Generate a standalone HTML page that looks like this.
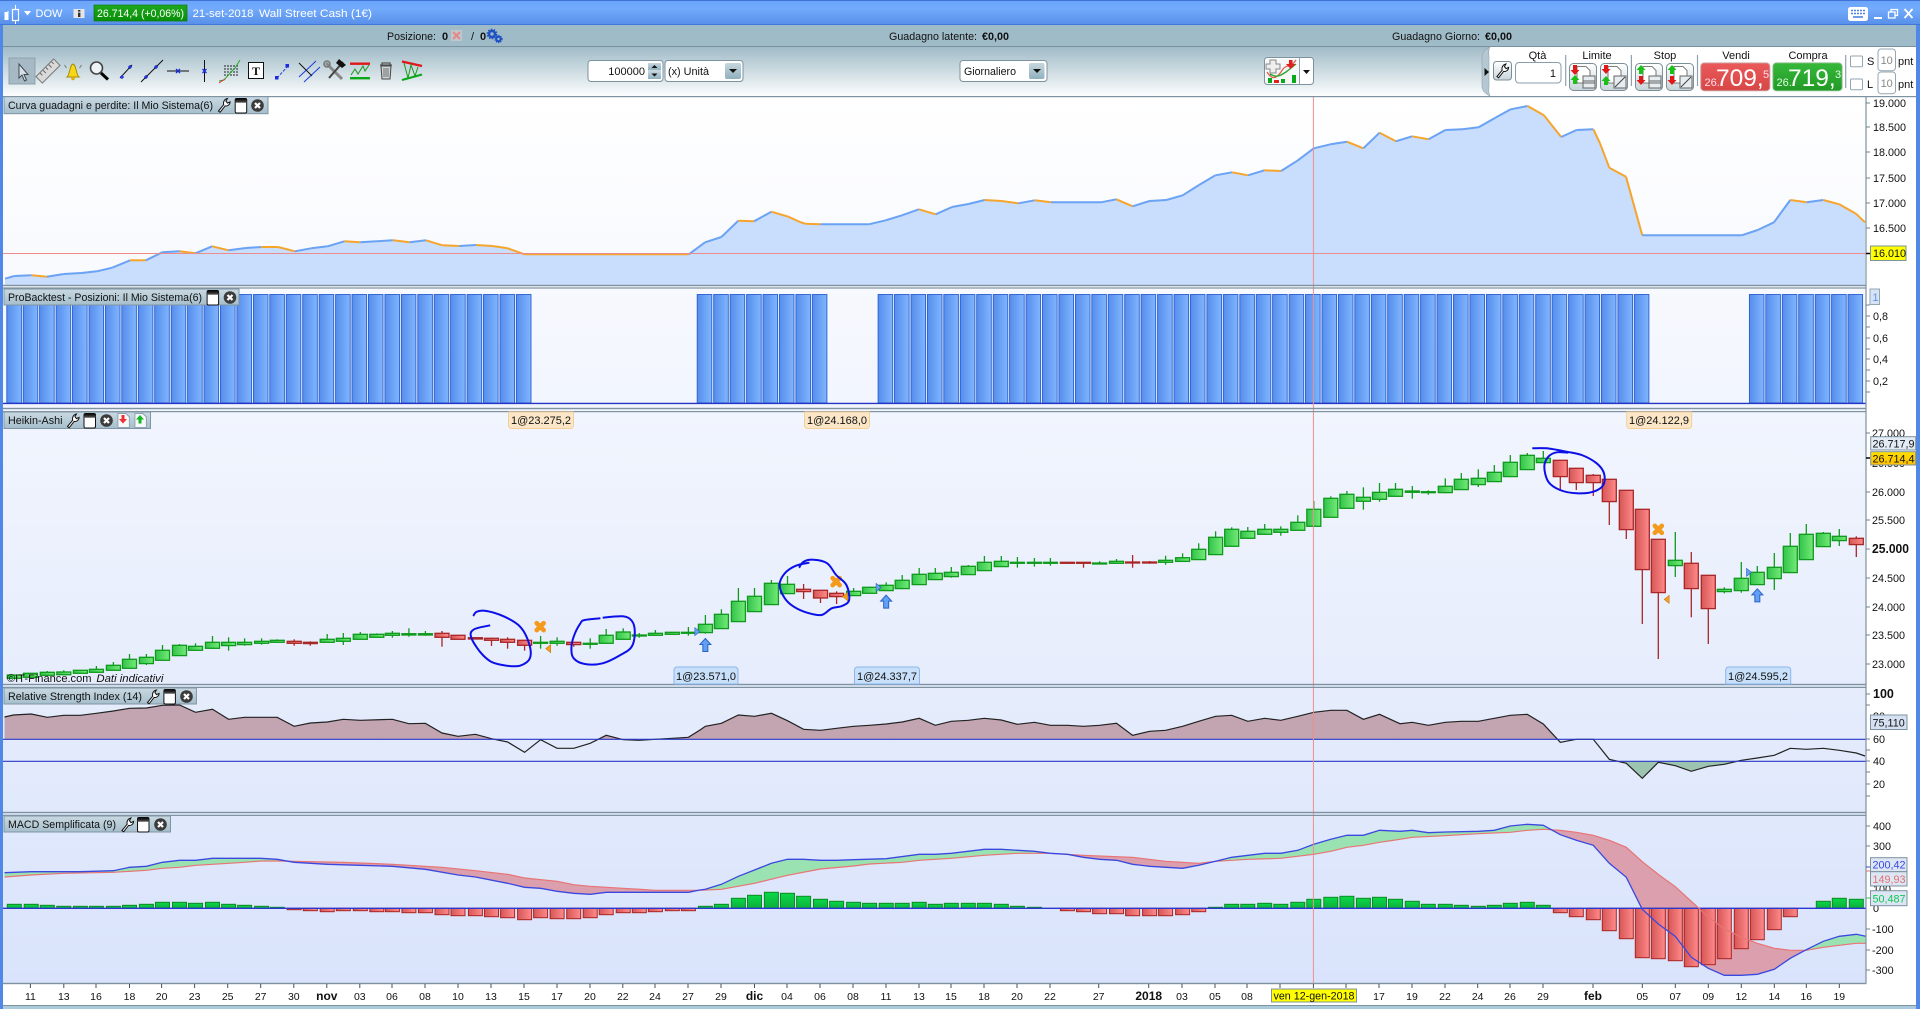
<!DOCTYPE html>
<html lang="it"><head><meta charset="utf-8"><title>DOW</title>
<style>
html,body{margin:0;padding:0;width:1920px;height:1009px;overflow:hidden;background:#fff}
svg{display:block;font-family:"Liberation Sans",Arial,sans-serif;font-size:11px;fill:#111}
text{white-space:pre}
.b{font-weight:bold}
.ax{font-size:10.8px}
</style></head><body>
<svg width="1920" height="1009" viewBox="0 0 1920 1009">
<defs>
<linearGradient id="gTitle" x1="0" y1="0" x2="0" y2="1"><stop offset="0" stop-color="#6aa4fa"/><stop offset=".35" stop-color="#72abfc"/><stop offset="1" stop-color="#578ee8"/></linearGradient>
<linearGradient id="gTool" x1="0" y1="0" x2="0" y2="1"><stop offset="0" stop-color="#a0bbc7"/><stop offset="1" stop-color="#fdfefe"/></linearGradient>
<linearGradient id="gPlot" x1="0" y1="0" x2="0" y2="1"><stop offset="0" stop-color="#ffffff"/><stop offset="1" stop-color="#d9e3fb"/></linearGradient>
<linearGradient id="gTab" x1="0" y1="0" x2="0" y2="1"><stop offset="0" stop-color="#c9d9e2"/><stop offset="1" stop-color="#a6bfcc"/></linearGradient>
<linearGradient id="gBar" x1="0" y1="0" x2="1" y2="0"><stop offset="0" stop-color="#558ded"/><stop offset="1" stop-color="#80b6fd"/></linearGradient>
<linearGradient id="gG" x1="0" y1="0" x2="1" y2="0"><stop offset="0" stop-color="#32c44a"/><stop offset="1" stop-color="#74ea78"/></linearGradient>
<linearGradient id="gR" x1="0" y1="0" x2="1" y2="0"><stop offset="0" stop-color="#d65656"/><stop offset="1" stop-color="#ff8a8a"/></linearGradient>
<linearGradient id="gHG" x1="0" y1="0" x2="0" y2="1"><stop offset="0" stop-color="#0ad848"/><stop offset="1" stop-color="#0cae3a"/></linearGradient>
<linearGradient id="gBtn" x1="0" y1="0" x2="0" y2="1"><stop offset="0" stop-color="#fff"/><stop offset="1" stop-color="#c8d4da"/></linearGradient>
<linearGradient id="gDrop" x1="0" y1="0" x2="0" y2="1"><stop offset="0" stop-color="#c6d6de"/><stop offset="1" stop-color="#8fb0bf"/></linearGradient>
<linearGradient id="gSell" x1="0" y1="0" x2="0" y2="1"><stop offset="0" stop-color="#ea5a5a"/><stop offset="1" stop-color="#d84646"/></linearGradient>
<linearGradient id="gBuy" x1="0" y1="0" x2="0" y2="1"><stop offset="0" stop-color="#36b83a"/><stop offset="1" stop-color="#229a26"/></linearGradient>
<linearGradient id="gGrn" x1="0" y1="0" x2="0" y2="1"><stop offset="0" stop-color="#1fa81f"/><stop offset="1" stop-color="#078f07"/></linearGradient>
<linearGradient id="gCur" x1="0" y1="0" x2="0" y2="1"><stop offset="0" stop-color="#ffe000"/><stop offset="1" stop-color="#ffbf00"/></linearGradient>
<linearGradient id="gWin" x1="0" y1="0" x2="0" y2="1"><stop offset="0" stop-color="#000"/><stop offset="1" stop-color="#555"/></linearGradient>
<g id="iWrench"><path d="M2 13.5 L7.2 7.2 C6.4 4.6 7.8 1.6 11 1 L9.4 3.6 L11 5.6 L13.6 4.4 C13.6 7 11 9 8.6 8.4 L3.6 14.8 Z" fill="#fff" stroke="#111" stroke-width="1"/></g>
<g id="iWin"><rect x=".5" y=".5" width="11.5" height="14.5" rx="1.5" fill="#fff" stroke="#111"/><rect x=".5" y=".5" width="11.5" height="4.2" fill="url(#gWin)"/></g>
<g id="iClose"><circle cx="6.5" cy="7.5" r="6.3" fill="#3c3c3c"/><path d="M4 5 L9 10 M9 5 L4 10" stroke="#fff" stroke-width="2.2"/></g>
<g id="iDoc"><path d="M.5 .5 H8.5 L12 4 V14.5 H.5 Z" fill="#f6f8fa" stroke="#8fa4b0"/></g>
<g id="iTB"><rect x=".5" y=".5" width="27" height="27" rx="4" fill="url(#gBtn)" stroke="#7b8f9a"/><path d="M8 3.5 H17 L21 7.5 V20 H8 Z" fill="#fff" stroke="#555" stroke-width=".8"/></g>
</defs>

<rect width="1920" height="1009" fill="#fff"/>
<rect x="0" y="0" width="1920" height="25" fill="url(#gTitle)"/>
<rect y="0" width="1920" height="1" fill="#3f72d4"/>
<rect y="24" width="1920" height="1" fill="#3f78dc"/>
<rect y="25" width="1920" height="21.5" fill="#9fbbc7"/>
<rect y="46" width="1920" height="1" fill="#7a929f"/>
<rect y="47" width="1920" height="49.5" fill="url(#gTool)"/>

<rect x="3" y="97" width="1863" height="886" fill="url(#gPlot)"/>

<g id="charts"></g>

<g fill="#7e929f">
<rect x="3" y="96" width="1917" height="1.2"/>
<rect x="3" y="284.8" width="1863.5" height="1.4"/><rect x="3" y="287.4" width="1863.5" height="1.2"/>
<rect x="3" y="407.8" width="1863.5" height="1.4"/><rect x="3" y="411" width="1863.5" height="1.2"/>
<rect x="3" y="683.8" width="1863.5" height="1.4"/><rect x="3" y="686.8" width="1863.5" height="1.2"/>
<rect x="3" y="811.8" width="1863.5" height="1.4"/><rect x="3" y="814.8" width="1863.5" height="1.2"/>
<rect x="3" y="982.8" width="1863.5" height="1.4"/><rect x="3" y="1005" width="1917" height="1.2"/>
<rect x="1865.4" y="97" width="1.2" height="886"/>
</g>
<rect y="1006" width="1920" height="3" fill="#a9cbdc"/>
<rect x="0" y="25" width="3" height="984" fill="#4f88e6"/>
<rect x="1916" y="25" width="4" height="984" fill="#4f88e6"/>

<!-- title bar -->
<g>
<path d="M8 11 V20 M8 13 V18" stroke="#fff" stroke-width="1"/><rect x="4.5" y="12" width="3.5" height="8" fill="#fff"/>
<rect x="12.5" y="9.5" width="6" height="11" fill="none" stroke="#fff" stroke-width="1.2"/><path d="M15.5 5 V9.5 M15.5 20.5 V24" stroke="#fff"/>
<path d="M24 11 H31 L27.5 15.5 Z" fill="#fff"/>
<text x="35.5" y="17" style="fill:#fff">DOW</text>
<rect x="73.5" y="9" width="11" height="9" fill="#e6e6e6"/><rect x="78" y="10" width="2.4" height="1.6" fill="#333"/><rect x="78" y="12.6" width="2.4" height="4.4" fill="#333"/>
<rect x="94" y="5" width="93" height="16" fill="url(#gGrn)" stroke="#0a7a0a" stroke-width=".7"/>
<text x="97" y="17" style="fill:#fff" textLength="87" lengthAdjust="spacingAndGlyphs">26.714,4 (+0,06%)</text>
<text x="192.5" y="17" style="fill:#fff" textLength="61" lengthAdjust="spacingAndGlyphs">21-set-2018</text>
<text x="259" y="17" style="fill:#fff" textLength="113" lengthAdjust="spacingAndGlyphs">Wall Street Cash (1€)</text>
<rect x="1848" y="7" width="20" height="14" rx="2.5" fill="#fff"/>
<path d="M1851 10.5 H1865 M1851 13.5 H1865" stroke="#4f84e0" stroke-width="1.6" stroke-dasharray="2 1"/><path d="M1853 17 H1863" stroke="#4f84e0" stroke-width="1.6"/>
<rect x="1874" y="17" width="8" height="2" fill="#fff"/>
<path d="M1888.5 12 H1895 V18 H1888.5 Z M1891 12 V9.5 H1897.5 V15.5 H1895" fill="none" stroke="#fff" stroke-width="1.3"/>
<path d="M1904.5 9 L1912.5 18 M1912.5 9 L1904.5 18" stroke="#fff" stroke-width="1.8"/>
</g>

<!-- info bar -->
<text x="387" y="40" textLength="49" lengthAdjust="spacingAndGlyphs">Posizione:</text>
<text x="442" y="40" class="b">0</text>
<rect x="451" y="30" width="11" height="11" fill="#c0c8ce"/><path d="M453 32 L460 39 M460 32 L453 39" stroke="#e58a8a" stroke-width="2.2"/>
<text x="471" y="40">/</text><text x="480" y="40" class="b">0</text>
<circle cx="492" cy="34" r="3" fill="#9fbbc7" stroke="#1f50c4" stroke-width="2.6"/><circle cx="492" cy="34" r="4.6" fill="none" stroke="#1f50c4" stroke-width="1.6" stroke-dasharray="1.6 1.3"/>
<circle cx="498.5" cy="39" r="2.2" fill="#9fbbc7" stroke="#1f50c4" stroke-width="2"/><circle cx="498.5" cy="39" r="3.5" fill="none" stroke="#1f50c4" stroke-width="1.2" stroke-dasharray="1.3 1"/>
<text x="889" y="40" textLength="88" lengthAdjust="spacingAndGlyphs">Guadagno latente:</text>
<text x="982" y="40" class="b" textLength="27" lengthAdjust="spacingAndGlyphs">€0,00</text>
<text x="1392" y="40" textLength="88" lengthAdjust="spacingAndGlyphs">Guadagno Giorno:</text>
<text x="1485" y="40" class="b" textLength="27" lengthAdjust="spacingAndGlyphs">€0,00</text>

<!-- toolbar icons -->
<g>
<rect x="9" y="58" width="26" height="26" fill="#a6b9c4" stroke="#8ea4b0"/>
<path d="M19 64 V78 L22 75 L24.5 81 L26.5 80 L24 74.5 L28 74.5 Z" fill="#d8dfe4" stroke="#3c4a54" stroke-width="1"/>
<g transform="rotate(45 48 71)"><rect x="43.5" y="58.5" width="9" height="25" fill="#d9d9d9" stroke="#777"/><path d="M44 62 h3 M44 66 h4 M44 70 h3 M44 74 h4 M44 78 h3" stroke="#666"/></g>
<path d="M67 77 C70 75 69.5 65 73 64 C76.5 65 76 75 79 77 Z" fill="#f6d818" stroke="#a78c08"/><circle cx="73" cy="78.5" r="1.8" fill="#e0b000"/><path d="M64.5 65 l2 3 M81.5 65 l-2 3" stroke="#777"/>
<circle cx="96.5" cy="68" r="6" fill="#eef3f6" stroke="#444" stroke-width="1.6"/><path d="M101 73 L108 79.5" stroke="#000" stroke-width="3"/>
<path d="M120 78 L132 65" stroke="#111"/><path d="M122 75 v4 M120 77 h4 M130 65 v4 M128 67 h4" stroke="#1a2ce0" stroke-width="1.3"/>
<path d="M141 82 L163 60" stroke="#111"/><path d="M146 75 v4 M144 77 h4 M156 65 v4 M154 67 h4" stroke="#1a2ce0" stroke-width="1.3"/>
<path d="M167 71 H189" stroke="#111"/><path d="M176 69 l4 4 M180 69 l-4 4" stroke="#1a2ce0" stroke-width="1.3"/>
<path d="M204.5 60 V82" stroke="#111"/><path d="M202.5 69 l4 4 M206.5 69 l-4 4" stroke="#1a2ce0" stroke-width="1.3"/>
<path d="M224 66 h14 M224 69 h14 M224 72 h14 M224 75 h14" stroke="#222" stroke-dasharray="2 1"/><path d="M219 81 L224 80 L231 72 L235 68 L240 60" fill="none" stroke="#2aa82a"/><path d="M219 83 L225 79" stroke="#e03030"/>
<rect x="248.5" y="62.5" width="15" height="16" fill="#fff" stroke="#111"/><text x="252" y="75" style="font:bold 12px 'Liberation Serif',serif;fill:#111">T</text>
<path d="M277 78 L288 66" stroke="#1a3ce0" stroke-dasharray="3 1.5"/><rect x="275" y="76" width="3.5" height="3.5" fill="#1a2ce0"/><rect x="285.5" y="64" width="3.5" height="3.5" fill="#1a2ce0"/>
<path d="M299 77 L316 61 M304 82 L320 67" stroke="#1a3ce0"/><path d="M299 63 L312 76" stroke="#111"/>
<path d="M326 63 L342 79" stroke="#888" stroke-width="3"/><path d="M343 62 L329 78" stroke="#444" stroke-width="2"/><path d="M339 59 L346 65 L342 68 L336 63 Z" fill="#111"/><circle cx="327" cy="64" r="3" fill="none" stroke="#777" stroke-width="1.6"/>
<rect x="350" y="62.5" width="20" height="2.4" fill="#e01818"/><rect x="350" y="77" width="20" height="2.4" fill="#08a818"/><path d="M351 75 L355 69 L358 74 L363 66 L365 71 L369 65" fill="none" stroke="#1a9a1a"/>
<path d="M380 65 h12 M382 65 V63 h8 v2" fill="none" stroke="#555" stroke-width="1.3"/><path d="M381 66 L382 79 H390 L391 66 Z" fill="#cfd4d6" stroke="#444"/><path d="M384 68 v9 M386 68 v9 M388 68 v9" stroke="#555" stroke-width=".8"/>
<path d="M402 61.5 L422 66" stroke="#e01818" stroke-width="2.2"/><path d="M402 80 L422 74.5" stroke="#08a818" stroke-width="2.2"/><path d="M404 63 L408 78 L411 65 L415 76 L418 67" fill="none" stroke="#1a9a1a"/>
</g>

<!-- inputs -->
<g stroke="#7c929e" fill="#fff">
<rect x="588" y="60.5" width="75" height="21" rx="3"/>
<rect x="665" y="60.5" width="78" height="21" rx="3"/>
<rect x="960" y="60.5" width="87" height="21" rx="3"/>
<rect x="1264.5" y="57.5" width="49" height="27" rx="3"/>
</g>
<text x="645" y="75" text-anchor="end">100000</text>
<rect x="648" y="63" width="13" height="7.5" fill="url(#gDrop)"/><rect x="648" y="71" width="13" height="8" fill="url(#gDrop)"/>
<path d="M651.5 68 h6 l-3 -3 Z M651.5 73.5 h6 l-3 3 Z" fill="#111"/>
<text x="668" y="75" textLength="41" lengthAdjust="spacingAndGlyphs">(x) Unità</text>
<rect x="725" y="63" width="16" height="16" rx="2" fill="url(#gDrop)"/><path d="M729 69 h8 l-4 4 Z" fill="#111"/>
<text x="964" y="75" textLength="52" lengthAdjust="spacingAndGlyphs">Giornaliero</text>
<rect x="1029" y="63" width="15.5" height="16" rx="2" fill="url(#gDrop)"/><path d="M1033 69 h8 l-4 4 Z" fill="#111"/>
<rect x="1266" y="59" width="33" height="24" fill="#f6f8f8"/>
<path d="M1270 60 h6 v4 h4 v5 h-4 v4 h-6 v-4 h-4 v-5 h4 Z" fill="#eee" stroke="#888"/>
<path d="M1267 72 C1272 80 1276 80 1283 69 C1287 64 1291 68 1296 60" fill="none" stroke="#e05858" stroke-width="1.2"/>
<path d="M1270 74 C1276 78 1280 76 1286 72 L1296 64" fill="none" stroke="#2aa82a" stroke-width="1.4"/>
<path d="M1289 60 h3.5 v4 h3 l-4.8 5 l-4.8 -5 h3 Z" fill="#e02020"/>
<rect x="1268" y="78" width="4" height="5" fill="#08a818"/><rect x="1274" y="80" width="5" height="3" fill="#e02020"/><rect x="1281" y="79" width="4" height="4" fill="#08a818"/><rect x="1292" y="75" width="4" height="8" fill="#08a818"/>
<path d="M1299.5 58 V84" stroke="#8ea2ae"/><path d="M1303 70 h7 l-3.5 4 Z" fill="#111"/>

<!-- right trading panel -->
<path d="M1490 47 C1484 50 1482 53 1482 58 V86 C1482 90 1484 93 1490 96 H1916 V47 Z" fill="#fff"/>
<path d="M1490 47 C1484 50 1482 53 1482 58 V86 C1482 90 1484 93 1490 96 C1488 92 1489 89 1489 86 V58 C1489 53 1488 50 1490 47 Z" fill="#b5c8d2" stroke="#8ea4b0" stroke-width=".6"/>
<path d="M1484.5 68 L1489 72 L1484.5 76 Z" fill="#111"/>
<rect x="1493.5" y="61.5" width="18" height="18.5" rx="3" fill="url(#gBtn)" stroke="#7b8f9a"/><use href="#iWrench" transform="translate(1495,63)"/>
<rect x="1515.5" y="62.5" width="45.5" height="20.5" rx="3.5" fill="#fff" stroke="#8a9ea9"/>
<text x="1556" y="77" text-anchor="end">1</text>
<g text-anchor="middle">
<text x="1537.5" y="59">Qtà</text><text x="1597" y="59">Limite</text><text x="1665" y="59">Stop</text><text x="1736" y="59">Vendi</text><text x="1808" y="59">Compra</text>
</g>
<path d="M1565.7 55 V86 M1631.4 55 V86 M1697.5 55 V86 M1845.7 55 V88" stroke="#8ea2ae" stroke-width="1.2"/>
<g>
<use href="#iTB" x="1569" y="63"/><use href="#iTB" x="1600" y="63"/><use href="#iTB" x="1635" y="63"/><use href="#iTB" x="1666" y="63"/>
<path d="M1573 65 h4 v5 h2.5 l-4.5 5 l-4.5 -5 h2.5 Z" fill="#e01818"/><path d="M1573 84 h4 v-4 h2.5 l-4.5 -5 l-4.5 5 h2.5 Z" fill="#18c018"/>
<rect x="1583" y="76" width="12" height="12" fill="#e6ecef" stroke="#666"/><path d="M1583 81 h12 M1583 83 h12" stroke="#666"/>
<path d="M1604 65 h4 v4 h2.5 l-4.5 5 l-4.5 -5 h2.5 Z" fill="#e01818"/><path d="M1604 85 h4 v-4 h2.5 l-4.5 -5 l-4.5 5 h2.5 Z" fill="#18c018"/>
<rect x="1614" y="76" width="12" height="12" fill="#e6ecef" stroke="#666"/><path d="M1615 87 L1625 77" stroke="#444"/>
<path d="M1639 74 h4 v-4 h2.5 l-4.5 -5 l-4.5 5 h2.5 Z" fill="#18c018"/><path d="M1639 76 h4 v4 h2.5 l-4.5 5 l-4.5 -5 h2.5 Z" fill="#e01818"/>
<rect x="1649" y="76" width="12" height="12" fill="#e6ecef" stroke="#666"/><path d="M1649 81 h12 M1649 83 h12" stroke="#666"/>
<path d="M1670 74 h4 v-4 h2.5 l-4.5 -5 l-4.5 5 h2.5 Z" fill="#18c018"/><path d="M1670 76 h4 v4 h2.5 l-4.5 5 l-4.5 -5 h2.5 Z" fill="#e01818"/>
<rect x="1680" y="76" width="12" height="12" fill="#e6ecef" stroke="#666"/><path d="M1681 87 L1691 77" stroke="#444"/>
</g>
<rect x="1700.8" y="63" width="69" height="27.7" rx="3.5" fill="url(#gSell)" stroke="#c8989a"/>
<rect x="1773" y="63" width="69" height="27.7" rx="3.5" fill="url(#gBuy)" stroke="#7bb97b"/>
<text x="1704.5" y="86" style="fill:#fde;font-size:11px">26.</text><text x="1716" y="86" style="fill:#fff;font-size:24.5px">709,</text><text x="1763" y="78" style="fill:#fde;font-size:11px">5</text>
<text x="1776.5" y="86" style="fill:#dfd;font-size:11px">26.</text><text x="1788" y="86" style="fill:#fff;font-size:24.5px">719,</text><text x="1835" y="78" style="fill:#dfd;font-size:11px">3</text>
<g fill="#fff" stroke="#93a6b0">
<rect x="1850.5" y="56" width="12" height="10.7" rx="1"/><rect x="1850.5" y="79" width="12" height="10.7" rx="1"/>
<rect x="1878" y="49" width="17.5" height="21.7" rx="3"/><rect x="1878" y="72" width="17.5" height="21.7" rx="3"/>
</g>
<text x="1867" y="65">S</text><text x="1867" y="88">L</text>
<text x="1886.7" y="64" text-anchor="middle" style="fill:#888">10</text><text x="1886.7" y="87" text-anchor="middle" style="fill:#888">10</text>
<text x="1898" y="65">pnt</text><text x="1898" y="88">pnt</text>

<!-- panel tabs -->
<g stroke="#7f95a3" fill="url(#gTab)">
<rect x="4" y="96.7" width="264" height="17"/>
<rect x="4" y="289" width="235" height="16"/>
<rect x="4" y="412" width="146.5" height="16.5"/>
<rect x="4" y="688" width="192.4" height="16"/>
<rect x="4" y="816" width="166.5" height="16"/>
</g>
<text x="8" y="109" textLength="205" lengthAdjust="spacingAndGlyphs">Curva guadagni e perdite: Il Mio Sistema(6)</text>
<use href="#iWrench" x="216.5" y="97.5"/><use href="#iWin" x="234.7" y="98"/><use href="#iClose" x="251" y="98"/>
<text x="8" y="301" textLength="194" lengthAdjust="spacingAndGlyphs">ProBacktest - Posizioni: Il Mio Sistema(6)</text>
<use href="#iWin" x="206.6" y="290"/><use href="#iClose" x="223.5" y="290"/>
<text x="8" y="424" textLength="54.5" lengthAdjust="spacingAndGlyphs">Heikin-Ashi</text>
<use href="#iWrench" x="65.5" y="413"/><use href="#iWin" x="83.5" y="413"/><use href="#iClose" x="100" y="413"/>
<use href="#iDoc" x="117.4" y="413"/><path d="M121.5 415 h3 v4 h2.5 l-4 4.5 l-4 -4.5 h2.5 Z" fill="#ef3030"/>
<use href="#iDoc" x="134.4" y="413"/><path d="M138.5 423.5 h3 v-4 h2.5 l-4 -4.5 l-4 4.5 h2.5 Z" fill="#10b820"/>
<text x="8" y="700" textLength="134" lengthAdjust="spacingAndGlyphs">Relative Strength Index (14)</text>
<use href="#iWrench" x="145.5" y="689"/><use href="#iWin" x="163.4" y="689"/><use href="#iClose" x="180" y="689"/>
<text x="8" y="828" textLength="108" lengthAdjust="spacingAndGlyphs">MACD Semplificata (9)</text>
<use href="#iWrench" x="120" y="817"/><use href="#iWin" x="137" y="817"/><use href="#iClose" x="154" y="817"/>

<!-- order labels -->
<path d="M508.5 412 h65 v13.5 a3 3 0 0 1 -3 3 h-59 a3 3 0 0 1 -3 -3 Z M804.5 412 h65 v13.5 a3 3 0 0 1 -3 3 h-59 a3 3 0 0 1 -3 -3 Z M1626.7 412 h65 v13.5 a3 3 0 0 1 -3 3 h-59 a3 3 0 0 1 -3 -3 Z" fill="#fbe7c8" stroke="#f5cf98"/>
<path d="M674 684 v-14 a3 3 0 0 1 3 -3 h58 a3 3 0 0 1 3 3 v14 Z M854.5 684 v-14 a3 3 0 0 1 3 -3 h59 a3 3 0 0 1 3 3 v14 Z M1725.7 684 v-14 a3 3 0 0 1 3 -3 h59 a3 3 0 0 1 3 3 v14 Z" fill="#c9e0fa" stroke="#8ab6ec"/>
<g text-anchor="middle" class="ax">
<text x="541" y="424" textLength="60" lengthAdjust="spacingAndGlyphs">1@23.275,2</text><text x="837" y="424" textLength="60" lengthAdjust="spacingAndGlyphs">1@24.168,0</text><text x="1659" y="424" textLength="60" lengthAdjust="spacingAndGlyphs">1@24.122,9</text>
<text x="706" y="680" textLength="60" lengthAdjust="spacingAndGlyphs">1@23.571,0</text><text x="887" y="680" textLength="60" lengthAdjust="spacingAndGlyphs">1@24.337,7</text><text x="1758" y="680" textLength="60" lengthAdjust="spacingAndGlyphs">1@24.595,2</text>
</g>
<text x="7" y="682" textLength="84.5" lengthAdjust="spacingAndGlyphs">©IT-Finance.com</text>
<text x="96.4" y="682" font-style="italic" textLength="67" lengthAdjust="spacingAndGlyphs">Dati indicativi</text>

<!-- right axis -->
<g class="ax">
<text x="1873" y="107">19.000</text><text x="1873" y="131">18.500</text><text x="1873" y="156">18.000</text><text x="1873" y="182">17.500</text><text x="1873" y="207">17.000</text><text x="1873" y="232">16.500</text>
<text x="1873" y="320">0,8</text><text x="1873" y="342">0,6</text><text x="1873" y="363">0,4</text><text x="1873" y="385">0,2</text>
<text x="1872" y="437">27.000</text><text x="1872" y="467">26.500</text><text x="1872" y="496">26.000</text><text x="1872" y="524">25.500</text><text x="1872" y="582">24.500</text><text x="1872" y="611">24.000</text><text x="1872" y="639">23.500</text><text x="1872" y="668">23.000</text>
<text x="1872" y="553" class="b" style="font-size:12.5px" textLength="37" lengthAdjust="spacingAndGlyphs">25.000</text>
<text x="1873" y="698" class="b" style="font-size:12.5px">100</text>
<text x="1873" y="720">80</text><text x="1873" y="743">60</text><text x="1873" y="765">40</text><text x="1873" y="788">20</text>
<text x="1873" y="830">400</text><text x="1873" y="850">300</text><text x="1873" y="893">100</text><text x="1873" y="912">0</text><text x="1872" y="933">-100</text><text x="1872" y="954">-200</text><text x="1872" y="974">-300</text>
</g>
<path stroke="#6f8390" stroke-width="1" d="M1866 103H1870M1866 127H1870M1866 152H1870M1866 178H1870M1866 203H1870M1866 228H1870M1866 316H1870M1866 338H1870M1866 359H1870M1866 381H1870M1866 305H1870M1866 327H1870M1866 349H1870M1866 370H1870M1866 392H1870M1866 433H1870M1866 492H1870M1866 520H1870M1866 549H1870M1866 578H1870M1866 607H1870M1866 635H1870M1866 664H1870M1866 694H1870M1866 739H1870M1866 761H1870M1866 784H1870M1866 705H1870M1866 750H1870M1866 772H1870M1866 796H1870M1866 826H1870M1866 846H1870M1866 929H1870M1866 950H1870M1866 970H1870"/>
<path d="M1866 253.5H1870M1866 458H1870" stroke="#000" stroke-width="1.4"/>
<path d="M1866 871H1870" stroke="#e07070"/><path d="M1866 867H1870" stroke="#3a48d8"/><path d="M1866 898H1870" stroke="#20c050"/>
<rect x="1870.5" y="246" width="35.5" height="14.5" fill="#ffff00" stroke="#7e929f"/><text x="1873" y="257" class="ax">16.010</text>
<rect x="1870" y="289" width="9.5" height="15.5" fill="#d5e3f4" stroke="#93a6b0"/><text x="1872.5" y="301" class="ax" style="fill:#5a92e8">1</text>
<rect x="1870.7" y="436.7" width="45" height="13.3" fill="#e3ebf5" stroke="#7e929f"/><text x="1872.5" y="447.5" class="ax" textLength="42" lengthAdjust="spacingAndGlyphs">26.717,9</text>
<rect x="1870.7" y="451.7" width="45" height="13.3" fill="url(#gCur)" stroke="#7e929f"/><text x="1872.5" y="462.5" class="ax" textLength="42" lengthAdjust="spacingAndGlyphs">26.714,4</text>
<rect x="1870.5" y="715" width="36.5" height="14.5" fill="#d5e1f2" stroke="#7e929f"/><text x="1872.5" y="726.5" class="ax">75,110</text>
<rect x="1870.5" y="857.7" width="36.5" height="14" fill="#dde6f4" stroke="#7e929f"/><text x="1872.5" y="868.7" class="ax" style="fill:#3a48e0">200,42</text>
<rect x="1870.5" y="871.7" width="36.5" height="14.3" fill="#dde6f4" stroke="#7e929f"/><text x="1872.5" y="883" class="ax" style="fill:#e07070">149,93</text>
<rect x="1870.5" y="890.7" width="36.5" height="15" fill="#dde6f4" stroke="#7e929f"/><text x="1872.5" y="902.5" class="ax" style="fill:#10c850">50,487</text>

<!-- x axis -->
<g text-anchor="middle" style="font-size:10.5px">
<text x="30.4" y="1000">11</text><text x="63.8" y="1000">13</text><text x="96" y="1000">16</text><text x="129.5" y="1000">18</text><text x="161.6" y="1000">20</text><text x="194.6" y="1000">23</text><text x="227.7" y="1000">25</text><text x="260.7" y="1000">27</text><text x="293.8" y="1000">30</text>
<text x="326.8" y="1000" class="b" style="font-size:12px">nov</text>
<text x="359.8" y="1000">03</text><text x="392" y="1000">06</text><text x="425" y="1000">08</text><text x="458" y="1000">10</text><text x="491" y="1000">13</text><text x="524" y="1000">15</text><text x="557" y="1000">17</text><text x="590" y="1000">20</text><text x="622.8" y="1000">22</text><text x="655" y="1000">24</text><text x="688" y="1000">27</text>
<text x="721" y="1000">29</text><text x="754.5" y="1000" class="b" style="font-size:12px">dic</text><text x="787" y="1000">04</text><text x="820" y="1000">06</text><text x="853" y="1000">08</text><text x="886" y="1000">11</text><text x="919" y="1000">13</text><text x="951" y="1000">15</text><text x="984" y="1000">18</text><text x="1017" y="1000">20</text><text x="1050" y="1000">22</text><text x="1098.7" y="1000">27</text>
<text x="1148.7" y="1000" class="b" style="font-size:12px">2018</text>
<text x="1182" y="1000">03</text><text x="1215" y="1000">05</text><text x="1247" y="1000">08</text><text x="1379" y="1000">17</text>
<text x="1412" y="1000">19</text><text x="1445" y="1000">22</text><text x="1477.7" y="1000">24</text><text x="1510" y="1000">26</text><text x="1543" y="1000">29</text>
<text x="1593" y="1000" class="b" style="font-size:12px">feb</text>
<text x="1642.3" y="1000">05</text><text x="1675.3" y="1000">07</text><text x="1708.3" y="1000">09</text><text x="1741.3" y="1000">12</text><text x="1774.3" y="1000">14</text><text x="1806.3" y="1000">16</text><text x="1839.3" y="1000">19</text>
</g>
<path stroke="#44525c" d="M30.4 984v4M63.8 984v4M96 984v4M129.5 984v4M161.6 984v4M194.6 984v4M227.7 984v4M260.7 984v4M293.8 984v4M326.8 984v4M359.8 984v4M392 984v4M425 984v4M458 984v4M491 984v4M524 984v4M557 984v4M590 984v4M622.8 984v4M655 984v4M688 984v4M721 984v4M754.5 984v4M787 984v4M820 984v4M853 984v4M886 984v4M919 984v4M951 984v4M984 984v4M1017 984v4M1050 984v4M1098.7 984v4M1148.7 984v4M1182 984v4M1215 984v4M1247 984v4M1280 984v4M1313.4 984v4M1346 984v4M1379 984v4M1412 984v4M1445 984v4M1477.7 984v4M1510 984v4M1543 984v4M1593 984v4M1642.3 984v4M1675.3 984v4M1708.3 984v4M1741.3 984v4M1774.3 984v4M1806.3 984v4M1839.3 984v4"/>
<rect x="1271.5" y="989" width="85" height="13" fill="#ffff00" stroke="#7e929f"/>
<text x="1314" y="999.5" text-anchor="middle" textLength="81" lengthAdjust="spacingAndGlyphs">ven 12-gen-2018</text>
</svg>

<script>
(function(){
var s='';
function P(ox,sx,oy,str){return str.trim().split(/\s+/).map(function(p){var a=p.split(',');return [ox+a[0]/sx,oy+a[1]/3];});}
function S(a){return a.map(function(p){return p[0].toFixed(1)+','+p[1].toFixed(1);}).join(' ');}
var eq=P(0,1.96,90,'10,566 28,558 62,556 92,560 125,552 160,549 190,544 220,533 255,511 286,511 318,487 352,484 383,490 416,469 448,481 482,474 512,471 545,471 578,484 610,475 642,469 675,454 706,457 738,454 770,451 803,457 835,451 867,466 900,468 933,465 965,468 995,475 1028,493 1350,493 1382,457 1414,441 1447,392 1478,394 1512,365 1545,380')
.concat(P(800,1.96,90,'0,396 10,401 40,403 135,403 168,391 200,376 233,358 266,373 298,351 330,342 362,330 395,333 428,340 460,331 492,337 525,337 590,337 620,328 652,349 685,333 718,330 750,316 782,285 814,256 847,247 878,256 910,241 943,243 975,212 1007,175 1040,163 1072,155 1104,175 1136,128 1168,154 1200,139 1232,148 1265,120 1298,118 1330,112 1362,84 1393,58 1426,48 1458,76 1492,141 1522,120 1555,118'))
.concat(P(1600,3,100,'0,130 28,203 78,230 127,406 425,406 473,390 522,367 571,300 620,307 670,300 718,313 768,341 795,367'));
s+='<polygon fill="#c9ddfc" points="'+S(eq)+' 1865,285 5,285"/>';
for(var i=0;i<eq.length-1;i++){var a=eq[i],b=eq[i+1],o=b[1]>a[1]+.1||(Math.abs(b[1]-a[1])<=.1&&a[0]<700);
 s+='<line x1="'+a[0].toFixed(1)+'" y1="'+a[1].toFixed(1)+'" x2="'+b[0].toFixed(1)+'" y2="'+b[1].toFixed(1)+'" stroke="'+(o?'#f6a52c':'#6aa2f4')+'" stroke-width="2"/>';}
s+='<line x1="3" x2="1866" y1="253.5" y2="253.5" stroke="#ec8c8c"/>';
function X(i){return 30.4+16.44*i;}
[[-1,30],[41,48],[52,98],[105,111]].forEach(function(r){for(var i=r[0];i<=r[1];i++)s+='<rect x="'+(X(i)-7.2).toFixed(1)+'" y="294.5" width="14.6" height="108.5" fill="url(#gBar)" stroke="#2a5ed0" stroke-width=".9"/>';});
s+='<line x1="3" x2="1866" y1="403.4" y2="403.4" stroke="#2436c4" stroke-width="1.4"/>';
function C(ox,sx,str){str.trim().split(/\s*;\s*/).forEach(function(l){if(!l)return;var a=l.trim().split(/\s+/),x=ox+a[0]/sx,c=a[1],t=410+a[2]/3,b=410+a[3]/3,wt=a[4]&&a[4]!='-'?410+a[4]/3:t,wb=a[5]?410+a[5]/3:b;
 var col=c=='g'?'#0f9a1c':'#a82626';
 s+='<line x1="'+x.toFixed(1)+'" x2="'+x.toFixed(1)+'" y1="'+wt.toFixed(1)+'" y2="'+wb.toFixed(1)+'" stroke="'+col+'" stroke-width="1.3"/>';
 s+='<rect x="'+(x-7).toFixed(1)+'" y="'+t.toFixed(1)+'" width="14" height="'+Math.max(b-t,1).toFixed(1)+'" fill="url(#g'+(c=='g'?'G':'R')+')" stroke="'+col+'" stroke-width="1.3"/>';});}
C(0,2.24,'32 g 795 805;68 g 790 802;106 g 787 796 783;143 g 786 794 781;180 g 781 790;216 g 778 787 768;254 g 766 781 756;290 g 748 775 732;328 g 742 761 732 765;364 g 721 751 705;402 g 706 737 702;438 g 709 721 700;476 g 697 715 678;512 g 697 707 682 722;548 g 697 704 685 707;586 g 694 700 685 704;621 g 691 697 688;659 r 694 700 688 707;695 r 697 701 694 707;733 g 688 697 672;769 g 685 694 669 705;807 g 673 688 666;844 g 673 682 670;879 g 670 676 663 683;916 g 671 675 655 680;953 g 671 675 663 677;990 r 670 682 663 710;1026 r 676 688;1065 r 683 687;1101 r 685 691 683 708;1137 r 688 697 682 716;1175 r 691 706 - 722;1211 g 697 700 678 716;1248 g 694 700 682 707;1285 r 697 704 - 710;1322 g 700 701 685 716;1358 g 676 700 657;1396 g 666 688 655;1432 g 675 677 669 683;1468 g 670 676 660;1506 g 667 673;1542 g 667 670 651 677');
C(700,2.24,'12 g 643 668 615 671;48 g 613 656 598;86 g 574 635 534;122 g 559 605 534;160 g 520 584 510;196 g 523 551 498;232 r 538 545 522 567;270 r 541 564 - 579;306 r 550 560 544 582;344 g 544 557 534;380 g 532 550 530;417 g 526 542 517;453 g 511 536 495;491 g 493 524 474;527 g 490 509 474;563 g 487 500 471 503;601 g 469 494 465;637 g 457 482 438;675 g 454 470 438;711 g 457 460 441 473;749 g 457 460 444 470;785 g 457 458 444 467;823 r 457 460;859 r 457 460 - 473;895 g 459 461 454 463;933 g 454 460 447;969 r 456 457 435 473;1007 r 456 458 453 461;1043 g 451 457 437 464;1081 g 443 454 430;1117 g 418 449 400;1155 g 382 434 364;1191 g 358 409 352;1227 g 364 385 351;1265 g 358 373 342;1301 g 358 367 349 377;1339 g 337 361 316;1375 g 298 349 273;1413 g 265 322 259;1449 g 253 295 243;1486 g 262 274 232 299;1522 g 247 268 219 275;1558 g 238 259 219');
C(1400,3,'37 g 243 247 228 266;85 g 245 248 241 254;136 g 229 248 205 250;184 g 208 239 189;235 g 205 224 178 231;283 g 187 215 165;331 g 157 200 135;382 g 136 179 129;430 g 145 158 123;481 r 151 200 - 243;529 r 175 218 - 240;580 r 196 218 192 258;628 r 208 275 - 345;679 r 241 359 - 387;727 r 298 479 - 642;775 r 388 548 - 747;826 g 451 467 366 501;874 r 460 536 426 622;925 r 496 596 - 702;973 g 538 545 532 550;1024 g 505 542 456 548;1072 g 487 524 468;1123 g 472 506 429 540;1171 g 409 488 369;1219 g 373 449 342;1270 g 370 410 366;1318 g 379 392 357 408;1369 r 385 404 379 441');
function XM(p){var x=p[0],y=p[1];s+='<path d="M'+(x-3.5)+' '+(y-3.5)+'L'+(x+3.5)+' '+(y+3.5)+'M'+(x+3.5)+' '+(y-3.5)+'L'+(x-3.5)+' '+(y+3.5)+'" stroke="#f49a1c" stroke-width="4.6" stroke-linecap="round"/>';}
function TL(p){var x=p[0],y=p[1];s+='<path d="M'+(x+2.5)+' '+(y-4)+'V'+(y+4)+'L'+(x-2.5)+' '+y+'Z" fill="#f6a020" stroke="#c87a10" stroke-width=".6"/>';}
function TR(p){var x=p[0],y=p[1];s+='<path d="M'+(x-2.5)+' '+(y-4)+'V'+(y+4)+'L'+(x+2.5)+' '+y+'Z" fill="#6a9ff0" stroke="#2a62c8" stroke-width=".6"/>';}
function UA(p){var x=p[0],y=p[1];s+='<path d="M'+x+' '+(y-6.5)+'L'+(x+5.5)+' '+(y-.5)+'H'+(x+2.5)+'V'+(y+6.5)+'H'+(x-2.5)+'V'+(y-.5)+'H'+(x-5.5)+'Z" fill="#62a0f4" stroke="#2a62c8"/>';}
XM([1210/2.24,410+650/3]);XM([700+305/2.24,410+515/3]);XM([1400+775/3,410+358/3]);
TL([1228/2.24,410+716/3]);TL([700+325/2.24,410+560/3]);TL([1400+800/3,410+568/3]);
TR([1562/2.24,410+665/3]);TR([700+400/2.24,410+532/3]);TR([1400+1047/3,410+487/3]);
UA([700+12/2.24,410+705/3]);UA([700+417/2.24,410+575/3]);UA([1400+1072/3,410+556/3]);
function H(a){var d='M'+a[0][0].toFixed(1)+' '+a[0][1].toFixed(1);for(var i=0;i<a.length-1;i++){var p0=a[i-1]||a[i],p1=a[i],p2=a[i+1],p3=a[i+2]||p2;
 d+='C'+(p1[0]+(p2[0]-p0[0])/6).toFixed(1)+' '+(p1[1]+(p2[1]-p0[1])/6).toFixed(1)+' '+(p2[0]-(p3[0]-p1[0])/6).toFixed(1)+' '+(p2[1]-(p3[1]-p1[1])/6).toFixed(1)+' '+p2[0].toFixed(1)+' '+p2[1].toFixed(1);}
 s+='<path d="'+d+'" fill="none" stroke="#0c10e8" stroke-width="2"/>';}
H(P(0,2.24,410,'1060,618 1068,605 1090,603 1130,620 1165,650 1185,700 1187,745 1165,767 1135,767 1100,755 1075,725 1055,680 1062,658 1098,646'));
H(P(0,2.24,410,'1350,623 1395,619 1415,632 1422,665 1415,710 1390,735 1350,760 1310,762 1285,745 1280,715 1285,680 1300,640 1310,630 1345,625'));
H(P(700,2.24,410,'222,473 232,455 255,449 285,460 305,495 328,525 334,570 318,588 295,595 272,615 240,608 210,590 190,565 178,525 190,490 215,467 245,458'));
H(P(1400,3,410,'397,115 440,115 500,125 545,135 590,160 612,190 610,225 580,245 530,250 480,240 445,215 433,170 445,140 470,127 505,128'));
var rsi=P(0,2.24,680,'10,111 30,105 70,102 106,112 143,106 180,106 216,100 254,93 290,85 328,84 364,76 402,75 438,97 476,88 512,118 548,112 621,112 659,139 695,129 733,126 769,118 807,121 879,118 916,131 953,130 990,159 1026,169 1065,163 1101,176 1137,186 1175,217 1211,179 1248,205 1285,205 1322,190 1358,166 1396,179 1432,181 1468,178 1506,175 1542,172')
.concat(P(700,2.24,680,'0,150 12,139 48,130 86,105 122,109 160,100 196,122 232,148 270,151 306,145 344,139 380,136 417,132 453,126 491,115 527,136 563,124 601,121 637,115 675,120 711,133 749,127 785,136 823,136 859,139 895,136 933,130 969,166 1007,154 1043,151 1081,139 1117,124 1155,109 1191,106 1227,124 1265,115 1301,121 1339,109 1375,97 1413,91 1449,91 1486,118 1522,103'))
.concat(P(1400,3,680,'0,131 37,127 85,136 136,127 184,124 235,124 283,115 331,106 382,103 430,132 481,187 529,178 580,178 628,238 679,250 727,295 775,247 826,257 874,274 925,259 973,253 1024,241 1072,234 1123,226 1171,205 1219,208 1270,205 1318,211 1369,219 1395,228'));
s+='<clipPath id="c60"><rect x="3" y="687" width="1863" height="52.3"/></clipPath><clipPath id="c40"><rect x="3" y="761.3" width="1863" height="50"/></clipPath>';
s+='<polygon clip-path="url(#c60)" fill="#c2a5b1" points="'+S(rsi)+' 1865,739.3 4.5,739.3"/>';
s+='<polygon clip-path="url(#c40)" fill="#9cc4b0" points="'+S(rsi)+' 1865,761.3 4.5,761.3"/>';
s+='<polyline fill="none" stroke="#222" stroke-width="1.2" points="'+S(rsi)+'"/>';
s+='<line x1="3" x2="1866" y1="739.3" y2="739.3" stroke="#2a38c8" stroke-width="1.2"/><line x1="3" x2="1866" y1="761.3" y2="761.3" stroke="#2a38c8" stroke-width="1.2"/>';
var mb=P(0,2.24,680,'10,578 70,575 180,575 254,572 290,562 328,559 364,547 402,541 438,541 476,535 584,535 621,538 659,547 733,553 807,556 879,559 953,568 1026,585 1065,591 1137,610 1175,622 1211,625 1248,634 1285,640 1322,643 1358,637 1542,637')
.concat(P(700,2.24,680,'0,630 12,628 48,613 86,589 122,570 160,550 196,538 232,538 270,541 306,541 344,539 417,536 491,523 527,523 563,520 637,508 675,508 749,514 785,520 823,523 859,532 895,538 933,541 969,553 1007,559 1081,565 1117,556 1155,544 1191,532 1265,520 1301,520 1339,511 1375,493 1413,478 1449,466 1486,466 1522,451'))
.concat(P(1400,3,680,'0,454 37,451 85,458 136,456 235,454 283,451 331,438 382,433 430,436 481,464 529,481 580,496 628,550 679,592 727,688 775,732 826,769 874,832 925,865 973,886 1024,886 1072,883 1123,868 1171,835 1219,809 1270,784 1318,769 1369,763 1397,769'));
var mr=P(0,2.24,680,'10,591 70,585 143,580 254,577 328,571 364,565 402,562 438,556 476,553 548,547 584,543 621,543 659,544 769,547 879,553 990,562 1065,572 1137,583 1175,594 1248,604 1285,614 1322,619 1396,625 1468,631')
.concat(P(700,2.24,680,'0,631 48,628 122,610 196,586 270,567 344,558 380,552 453,547 491,541 563,535 637,526 711,520 785,520 859,526 969,532 1043,544 1117,550 1155,544 1227,538 1301,535 1375,523 1413,514 1449,502 1486,496 1522,487'))
.concat(P(1400,3,680,'0,478 37,472 136,467 235,461 331,457 382,451 430,448 481,451 529,457 580,466 628,481 679,502 727,545 775,583 826,620 874,664 925,711 973,746 1024,772 1072,790 1123,805 1171,811 1219,811 1270,802 1318,796 1369,790 1397,790'));
var rr=S(mr.slice().reverse());
s+='<clipPath id="cA"><polygon points="4,815 '+S(mr)+' 1866,815"/></clipPath><clipPath id="cB"><polygon points="4,983 '+S(mr)+' 1866,983"/></clipPath>';
s+='<polygon clip-path="url(#cA)" fill="#9be2b2" points="'+S(mb)+' '+rr+'"/>';
s+='<polygon clip-path="url(#cB)" fill="#dc9fad" points="'+S(mb)+' '+rr+'"/>';
function Hs(ox,sx,str){str.trim().split(/\s+/).forEach(function(p){var a=p.split(','),x=ox+a[0]/sx,z=+a[1],y=680+z/3,y0=908.3;
 if(z<685)s+='<rect x="'+(x-7).toFixed(1)+'" y="'+y.toFixed(1)+'" width="14" height="'+(y0-y).toFixed(1)+'" fill="url(#gHG)" stroke="#0c8a22" stroke-width="1"/>';
 else s+='<rect x="'+(x-7).toFixed(1)+'" y="'+y0+'" width="14" height="'+(y-y0).toFixed(1)+'" fill="url(#gR)" stroke="#a82626" stroke-width="1"/>';});}
Hs(0,2.24,'32,673 70,673 106,676 143,679 180,679 216,679 254,679 290,676 328,673 364,667 402,667 438,670 476,667 512,673 548,676 586,679 621,682 659,689 695,692 733,695 769,692 807,692 844,695 879,695 916,698 953,698 990,704 1026,707 1065,707 1101,710 1137,713 1175,719 1211,713 1248,716 1285,716 1322,713 1358,704 1396,698 1432,698 1468,695 1506,692 1542,692');
Hs(700,2.24,'12,679 48,673 86,655 122,646 160,637 196,640 232,649 270,658 306,664 344,667 380,670 417,670 453,670 491,667 527,673 563,670 601,670 637,670 675,673 711,679 749,682 823,692 859,695 895,701 933,701 969,707 1007,707 1043,707 1081,704 1117,695 1155,682 1191,673 1227,673 1265,670 1301,673 1339,667 1375,658 1413,652 1449,649 1486,655 1522,652 1558,658');
Hs(1400,3,'37,664 85,673 136,673 184,676 235,679 283,676 331,670 382,667 430,676 481,698 529,710 580,719 628,752 679,776 727,833 775,836 826,842 874,860 925,854 973,836 1024,806 1072,779 1123,749 1171,710 1270,664 1318,655 1369,658');
s+='<line x1="3" x2="1866" y1="908.3" y2="908.3" stroke="#2a38d0" stroke-width="1.3"/>';
s+='<polyline fill="none" stroke="#e87474" stroke-width="1.2" points="'+S(mr)+'"/>';
s+='<polyline fill="none" stroke="#3a48e0" stroke-width="1.3" points="'+S(mb)+'"/>';
s+='<line x1="1313.4" x2="1313.4" y1="97" y2="983" stroke="#ee8e8e" stroke-width="1"/>';
document.getElementById('charts').innerHTML=s;
})();
</script>
</body></html>
